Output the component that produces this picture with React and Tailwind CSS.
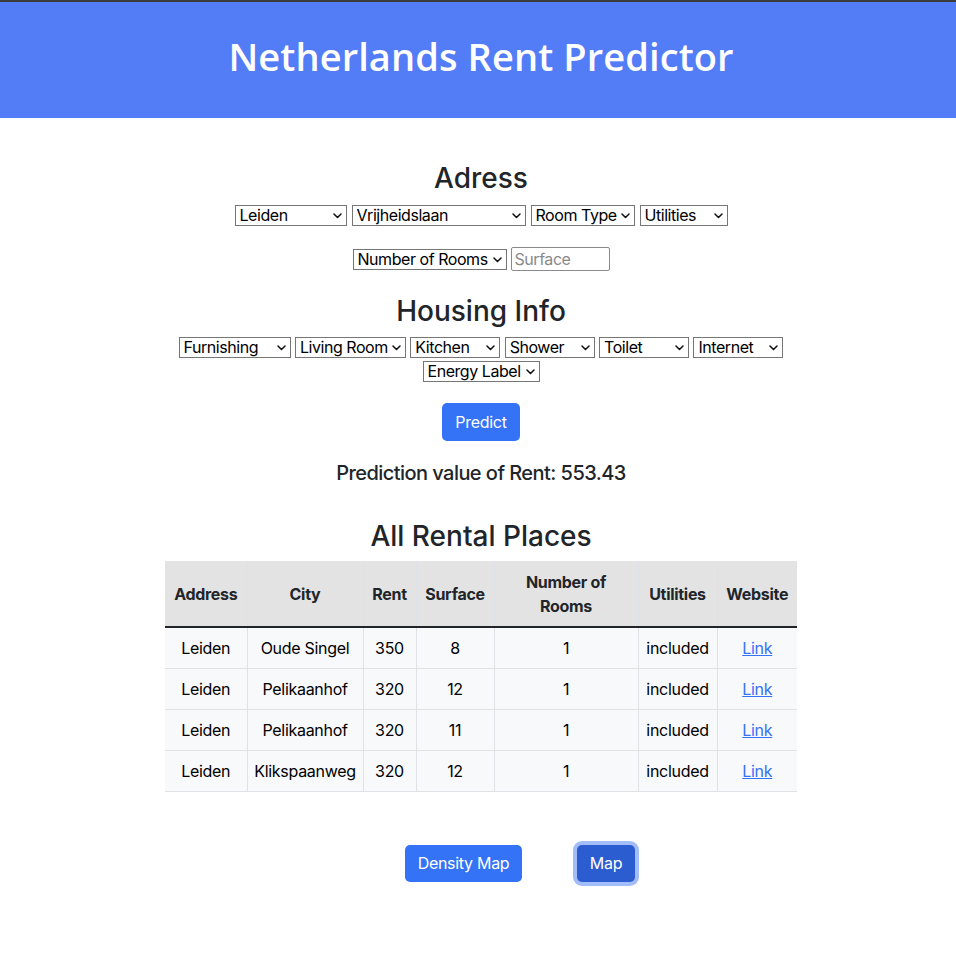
import React from "react";

function Sel({ w, label }) {
  return (
    <span className={`relative inline-flex h-[21px] ${w}`}>
      <select className="appearance-none w-full h-full border border-[#767676] bg-white pl-[4px] pr-[14px] text-[16px] tracking-[-0.45px] leading-[19px] text-black rounded-none outline-none">
        <option>{label}</option>
      </select>
      <svg
        className="pointer-events-none absolute right-[5px] top-[8px]"
        width="9"
        height="6"
        viewBox="0 0 9 6"
      >
        <path d="M1 1l3.5 3.5L8 1" stroke="#111" strokeWidth="1.5" fill="none" strokeLinecap="round" strokeLinejoin="round" />
      </svg>
    </span>
  );
}

const rows = [
  ["Leiden", "Oude Singel", "350", "8", "1", "included"],
  ["Leiden", "Pelikaanhof", "320", "12", "1", "included"],
  ["Leiden", "Pelikaanhof", "320", "11", "1", "included"],
  ["Leiden", "Klikspaanweg", "320", "12", "1", "included"],
];

export default function App() {
  return (
    <div className="min-h-[972px] bg-white text-[#212529] font-['Inter','Liberation_Sans',sans-serif]">
      <div className="h-[2px] bg-[#3c3c3c]" />
      <header className="h-[116px] bg-[#537cf7] flex items-center justify-center pl-[6px] pb-[8px]">
        <h1 className="text-white text-[38px] font-semibold tracking-[0.1px] font-['Open_Sans','Noto_Sans',sans-serif] leading-none">
          Netherlands Rent Predictor
        </h1>
      </header>

      <main className="pl-[6px] flex flex-col items-center">
        <h3 className="mt-[43px] h-[34px] text-[28px] leading-[34px] font-medium">Adress</h3>
        <div className="mt-[10px] flex gap-[5px] justify-center">
          <Sel w="w-[112px]" label="Leiden" />
          <Sel w="w-[174px]" label="Vrijheidslaan" />
          <Sel w="w-[104px]" label="Room Type" />
          <Sel w="w-[88px]" label="Utilities" />
        </div>
        <div className="mt-[21px] flex gap-[4px] justify-center items-center">
          <Sel w="w-[154px]" label="Number of Rooms" />
          <input
            placeholder="Surface"
            className="w-[99px] h-[24px] border border-[#8a8a8a] rounded-[2px] px-[3px] text-[16px] tracking-[-0.45px] placeholder:text-[#8a8a8a] outline-none"
          />
        </div>

        <h3 className="mt-[23px] h-[34px] text-[28px] leading-[34px] font-medium">Housing Info</h3>
        <div className="mt-[9px] flex gap-[4.4px] justify-center">
          <Sel w="w-[112px]" label="Furnishing" />
          <Sel w="w-[111px]" label="Living Room" />
          <Sel w="w-[90px]" label="Kitchen" />
          <Sel w="w-[90px]" label="Shower" />
          <Sel w="w-[90px]" label="Toilet" />
          <Sel w="w-[90px]" label="Internet" />
        </div>
        <div className="mt-[3px] flex justify-center">
          <Sel w="w-[117px]" label="Energy Label" />
        </div>

        <button className="mt-[21px] w-[78px] h-[38px] rounded-[5px] bg-[#3472f6] text-white text-[16px] tracking-[-0.3px]">
          Predict
        </button>

        <p className="mt-[20px] h-[24px] text-[20px] tracking-[-0.55px] leading-[24px] font-medium">
          Prediction value of Rent: 553.43
        </p>

        <h3 className="mt-[34px] h-[34px] text-[28px] leading-[34px] font-medium">All Rental Places</h3>

        <table className="mt-[8px] w-[632px] border-collapse text-[16px] tracking-[-0.3px] text-center">
          <colgroup>
            <col className="w-[82px]" />
            <col className="w-[116px]" />
            <col className="w-[53px]" />
            <col className="w-[78px]" />
            <col className="w-[144px]" />
            <col className="w-[79px]" />
            <col className="w-[80px]" />
          </colgroup>
          <thead>
            <tr className="bg-[#e3e3e4] border-b-2 border-[#212529]">
              {["Address", "City", "Rent", "Surface", "Number of Rooms", "Utilities", "Website"].map((h) => (
                <th
                  key={h}
                  className="h-[66px] px-[8px] py-[8px] font-bold leading-[24px] border-x border-[#dee2e6] first:border-l-0 last:border-r-0"
                >
                  {h === "Number of Rooms" ? (
                    <>
                      Number of
                      <br />
                      Rooms
                    </>
                  ) : (
                    h
                  )}
                </th>
              ))}
            </tr>
          </thead>
          <tbody>
            {rows.map((r, i) => (
              <tr key={i} className="bg-[#f8f9fa] border-b border-[#dee2e6]">
                {r.map((c, j) => (
                  <td
                    key={j}
                    className="h-[41px] px-[4px] leading-[24px] text-black border-x border-[#dee2e6] first:border-l-0 whitespace-nowrap"
                  >
                    {c}
                  </td>
                ))}
                <td className="h-[41px] leading-[24px] border-x border-[#dee2e6] border-r-0">
                  <a href="#" className="text-[#3472f6] underline">
                    Link
                  </a>
                </td>
              </tr>
            ))}
          </tbody>
        </table>

        <div className="mt-[53px] ml-[78px] flex items-center gap-[55px]">
          <button className="w-[117px] h-[37px] rounded-[5px] bg-[#3472f6] text-white text-[16px] tracking-[-0.3px]">
            Density Map
          </button>
          <button className="w-[58px] h-[37px] rounded-[5px] bg-[#2b5cd0] text-white text-[16px] tracking-[-0.3px] ring-4 ring-[#a3bdf8]">
            Map
          </button>
        </div>
      </main>
    </div>
  );
}
